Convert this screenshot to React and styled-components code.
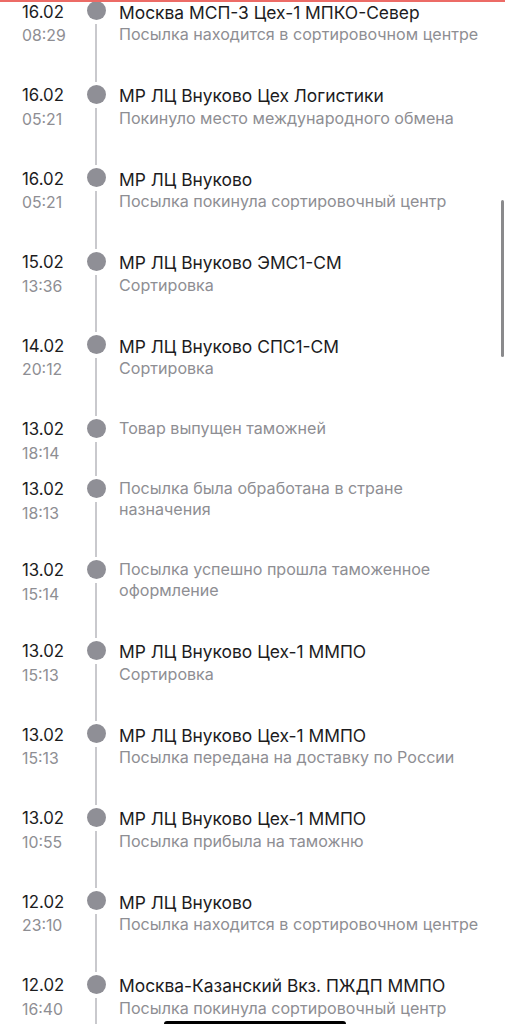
import React from "react";
import styled, { createGlobalStyle } from "styled-components";

const GlobalStyle = createGlobalStyle`
  html, body {
    margin: 0;
    padding: 0;
    background: #ffffff;
  }
  body {
    font-family: Inter, "Noto Sans", "Liberation Sans", sans-serif;
    -webkit-font-smoothing: antialiased;
  }
`;

const Screen = styled.div`
  position: relative;
  width: 508px;
  height: 1024px;
  overflow: hidden;
  background: #ffffff;
`;

const TopLine = styled.div`
  position: absolute;
  top: 0;
  left: 0;
  width: 505px;
  height: 2px;
  background: #ec6b66;
  z-index: 2;
`;

const ScrollThumb = styled.div`
  position: absolute;
  top: 200px;
  right: 4px;
  width: 3px;
  height: 157px;
  border-radius: 2px;
  background: #8a8a8c;
`;

const HomeBar = styled.div`
  position: absolute;
  bottom: -3px;
  left: 164px;
  width: 182px;
  height: 6px;
  border-radius: 3px;
  background: #000000;
`;

const Timeline = styled.div`
  display: flex;
  flex-direction: column;
  margin-top: -2px;
`;

const Row = styled.div`
  display: flex;
  align-items: stretch;
`;

const DateCol = styled.div`
  width: 64px;
  flex-shrink: 0;
  padding: 2.5px 0 0 22px;
  display: flex;
  flex-direction: column;
`;

const DateText = styled.span`
  font-size: 16.8px;
  line-height: 23.5px;
  color: #1c1c1e;
`;

const TimeText = styled.span`
  font-size: 15.8px;
  line-height: 23px;
  color: #8e8e93;
`;

const Rail = styled.div`
  width: 20px;
  flex-shrink: 0;
  display: flex;
  flex-direction: column;
  align-items: center;
  padding-top: 3px;
`;

const Dot = styled.div`
  width: 19px;
  height: 19px;
  border-radius: 50%;
  background: #8f8f96;
  flex-shrink: 0;
`;

const Line = styled.div`
  width: 2px;
  flex: 1;
  margin-top: 4px;
  background: #c9c9cd;
`;

const Content = styled.div`
  flex: 1;
  padding: 2.5px 20px 36.5px 13px;
  display: flex;
  flex-direction: column;
`;

const Title = styled.span`
  font-size: 17.4px;
  line-height: 23.5px;
  color: #1c1c1e;
`;

const Sub = styled.span`
  font-size: 16.1px;
  line-height: 21px;
  color: #8e8e93;
`;

const events = [
  { date: "16.02", time: "08:29", title: "Москва МСП-3 Цех-1 МПКО-Север", sub: "Посылка находится в сортировочном центре" },
  { date: "16.02", time: "05:21", title: "МР ЛЦ Внуково Цех Логистики", sub: "Покинуло место международного обмена" },
  { date: "16.02", time: "05:21", title: "МР ЛЦ Внуково", sub: "Посылка покинула сортировочный центр" },
  { date: "15.02", time: "13:36", title: "МР ЛЦ Внуково ЭМС1-СМ", sub: "Сортировка" },
  { date: "14.02", time: "20:12", title: "МР ЛЦ Внуково СПС1-СМ", sub: "Сортировка" },
  { date: "13.02", time: "18:14", sub: "Товар выпущен таможней" },
  { date: "13.02", time: "18:13", sub: "Посылка была обработана в стране назначения" },
  { date: "13.02", time: "15:14", sub: "Посылка успешно прошла таможенное оформление" },
  { date: "13.02", time: "15:13", title: "МР ЛЦ Внуково Цех-1 ММПО", sub: "Сортировка" },
  { date: "13.02", time: "15:13", title: "МР ЛЦ Внуково Цех-1 ММПО", sub: "Посылка передана на доставку по России" },
  { date: "13.02", time: "10:55", title: "МР ЛЦ Внуково Цех-1 ММПО", sub: "Посылка прибыла на таможню" },
  { date: "12.02", time: "23:10", title: "МР ЛЦ Внуково", sub: "Посылка находится в сортировочном центре" },
  { date: "12.02", time: "16:40", title: "Москва-Казанский Вкз. ПЖДП ММПО", sub: "Посылка покинула сортировочный центр" },
];

export default function App() {
  return (
    <>
      <GlobalStyle />
      <Screen>
        <TopLine />
        <Timeline>
          {events.map((e, i) => (
            <Row key={i}>
              <DateCol>
                <DateText>{e.date}</DateText>
                <TimeText>{e.time}</TimeText>
              </DateCol>
              <Rail>
                <Dot />
                <Line />
              </Rail>
              <Content>
                {e.title && <Title>{e.title}</Title>}
                <Sub>{e.sub}</Sub>
              </Content>
            </Row>
          ))}
        </Timeline>
        <ScrollThumb />
        <HomeBar />
      </Screen>
    </>
  );
}
